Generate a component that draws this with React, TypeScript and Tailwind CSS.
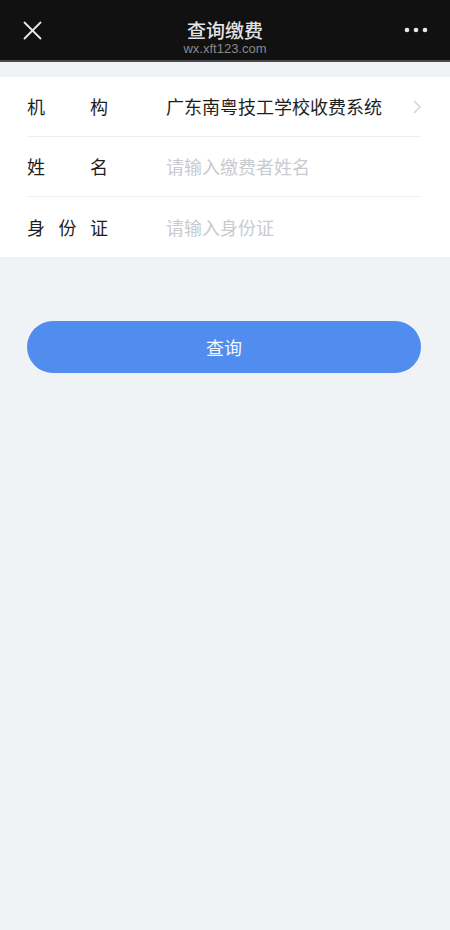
import React from "react";

const font = { fontFamily: '"Noto Sans CJK SC", "Noto Sans", sans-serif' };

function Row({ label, children, last }: { label: React.ReactNode; children: React.ReactNode; last?: boolean }) {
  return (
    <div className={`flex h-[60px] items-center ${last ? "" : "border-b border-[#eeeeee]"}`}>
      {label}
      <div className="flex flex-1 items-center">{children}</div>
    </div>
  );
}

export default function App() {
  return (
    <div className="flex min-h-[930px] w-[450px] flex-col bg-[#f0f3f6]" style={font}>
      <div className="relative flex h-[62px] items-center justify-between border-b-2 border-[#4a4a4a] bg-[#111111] px-[23px]">
        <svg width="19" height="19" viewBox="0 0 19 19" className="mt-[1px]">
          <path d="M1.5 1.5 L17.5 17.5 M17.5 1.5 L1.5 17.5" stroke="#e8e8e8" strokeWidth="1.8" strokeLinecap="round" />
        </svg>
        <div className="absolute left-0 right-0 top-[19px] flex flex-col items-center">
          <div className="text-[19px] leading-[22px] font-medium text-[#e4e4e4]">查询缴费</div>
          <div className="mt-[1px] text-[13px] leading-[14px] text-[#8a8a8a]" style={{ fontFamily: '"Liberation Sans", Arial, sans-serif' }}>wx.xft123.com</div>
        </div>
        <svg width="24" height="6" viewBox="0 0 24 6" className="mr-[-1px]">
          <circle cx="3" cy="3" r="2.3" fill="#e8e8e8" />
          <circle cx="12" cy="3" r="2.3" fill="#e8e8e8" />
          <circle cx="21" cy="3" r="2.3" fill="#e8e8e8" />
        </svg>
      </div>

      <div className="mt-[15px] bg-white pl-[27px] pr-[29px]">
        <Row label={<div className="flex w-[81px] justify-between text-[18px] text-[#1e1e1e]"><span>机</span><span>构</span></div>}>
          <div className="ml-[58px] flex flex-1 items-center justify-between">
            <span className="text-[18px] text-[#1e1e1e]">广东南粤技工学校收费系统</span>
            <svg width="8" height="14" viewBox="0 0 8 14">
              <path d="M1 1 L7 7 L1 13" fill="none" stroke="#cfcfcf" strokeWidth="1.3" />
            </svg>
          </div>
        </Row>
        <Row label={<div className="flex w-[81px] justify-between text-[18px] text-[#1e1e1e]"><span>姓</span><span>名</span></div>}>
          <span className="ml-[58px] text-[18px] text-[#c8cbd0]">请输入缴费者姓名</span>
        </Row>
        <Row last label={<div className="flex w-[81px] justify-between text-[18px] text-[#1e1e1e]"><span>身</span><span>份</span><span>证</span></div>}>
          <span className="ml-[58px] text-[18px] text-[#c8cbd0]">请输入身份证</span>
        </Row>
      </div>

      <div className="ml-[27px] mr-[29px] mt-[64px] flex h-[52px] items-center justify-center rounded-full bg-[#508def] text-[18px] text-[#f4f7fd]">
        查询
      </div>
    </div>
  );
}
